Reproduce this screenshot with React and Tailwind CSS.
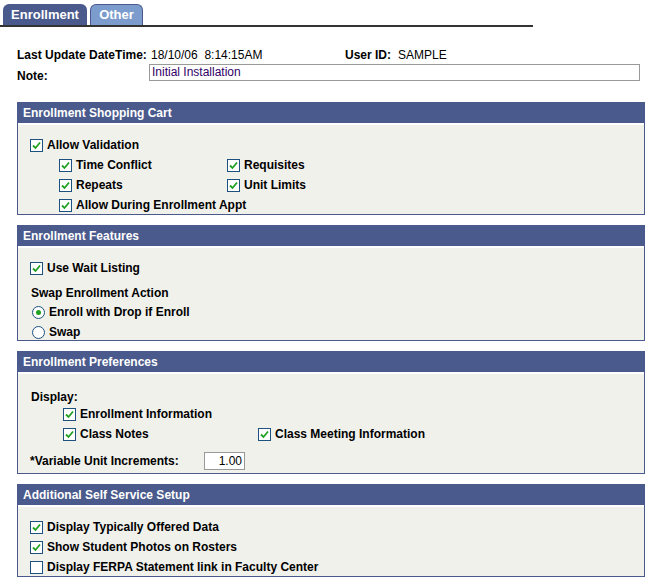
import React from 'react';

const Check = ({ checked = true }) => (
  <span className="w-[13px] h-[13px] border border-[#1c5180] bg-white flex items-center justify-center shrink-0">
    {checked && (
      <svg width="9" height="9" viewBox="0 0 9 9"><path d="M1 4.5 L3.5 7 L8 1.5" stroke="#21a121" strokeWidth="1.8" fill="none" /></svg>
    )}
  </span>
);

const Radio = ({ checked }) => (
  <span className="w-[13px] h-[13px] rounded-full border border-[#1c5180] bg-white flex items-center justify-center shrink-0">
    {checked && <span className="w-[5px] h-[5px] rounded-full bg-[#21a121]" />}
  </span>
);

const Item = ({ label, checked, radio, className = '' }) => (
  <div className={`flex items-center gap-[4px] h-[20px] font-bold ${className}`}>
    {radio ? <Radio checked={checked} /> : <Check checked={checked} />}
    <span>{label}</span>
  </div>
);

const Section = ({ title, children, h }) => (
  <div className="border border-[#4a5a8c] mx-[17px] mr-[5px]">
    <div className="bg-[#4a5a8c] text-white font-bold h-[20px] leading-[20px] px-[5px]">{title}</div>
    <div className={`bg-[#f1f1ec] border-t-2 border-white px-[12px] pt-[10px] ${h}`}>{children}</div>
  </div>
);

export default function App() {
  return (
    <div className="w-[650px] h-[581px] bg-white text-[12px] text-black" style={{ fontFamily: '"Liberation Sans", Arial, sans-serif' }}>
      <div className="flex items-end pl-[3px] pt-[4px] w-[533px] border-b-2 border-[#333]">
        <div className="w-[84px] h-[21px] bg-[#4a5a8c] text-white font-bold text-[13px] rounded-t-[6px] flex items-center justify-center">Enrollment</div>
        <div className="w-[53px] h-[21px] ml-[3px] bg-[#7b9ccc] text-white font-bold text-[13px] rounded-t-[6px] flex items-center justify-center border border-[#4a5a8c] border-b-0">Other</div>
      </div>
      <div className="pl-[17px] pt-[19px] h-[75px] font-bold">
        <div className="flex h-[18px] items-center">
          <span className="w-[134px]">Last Update DateTime:</span>
          <span className="font-normal w-[194px]">18/10/06&nbsp; 8:14:15AM</span>
          <span className="w-[53px]">User ID:</span>
          <span className="font-normal">SAMPLE</span>
        </div>
        <div className="flex">
          <span className="w-[132px] pt-[3px]">Note:</span>
          <div className="w-[491px] h-[17px] border border-[#999] bg-white font-normal text-[#330066] px-[2px] leading-[15px]">Initial Installation</div>
        </div>
      </div>
      <div className="flex flex-col gap-[10px]">
        <Section title="Enrollment Shopping Cart" h="h-[91px]">
          <Item label="Allow Validation" />
          <div className="pl-[29px] grid grid-cols-[168px_1fr]">
            <Item label="Time Conflict" />
            <Item label="Requisites" />
            <Item label="Repeats" />
            <Item label="Unit Limits" />
            <Item label="Allow During Enrollment Appt" className="col-span-2" />
          </div>
        </Section>
        <Section title="Enrollment Features" h="h-[94px]">
          <Item label="Use Wait Listing" />
          <div className="font-bold h-[24px] pt-[6px] pl-[1px]">Swap Enrollment Action</div>
          <Item label="Enroll with Drop if Enroll" radio checked className="pl-[2px]" />
          <Item label="Swap" radio checked={false} className="pl-[2px]" />
        </Section>
        <Section title="Enrollment Preferences" h="h-[101px]">
          <div className="font-bold h-[20px] pt-[4px] pl-[1px]">Display:</div>
          <div className="pl-[33px] grid grid-cols-[195px_1fr]">
            <Item label="Enrollment Information" className="col-span-2" />
            <Item label="Class Notes" />
            <Item label="Class Meeting Information" />
          </div>
          <div className="flex items-center mt-[8px] font-bold">
            <span className="w-[174px]">*Variable Unit Increments:</span>
            <div className="w-[41px] h-[18px] border border-[#999] bg-white font-normal text-right pr-[2px] leading-[16px]">1.00</div>
          </div>
        </Section>
        <Section title="Additional Self Service Setup" h="h-[71px]">
          <Item label="Display Typically Offered Data" />
          <Item label="Show Student Photos on Rosters" />
          <Item label="Display FERPA Statement link in Faculty Center" checked={false} />
        </Section>
      </div>
    </div>
  );
}
